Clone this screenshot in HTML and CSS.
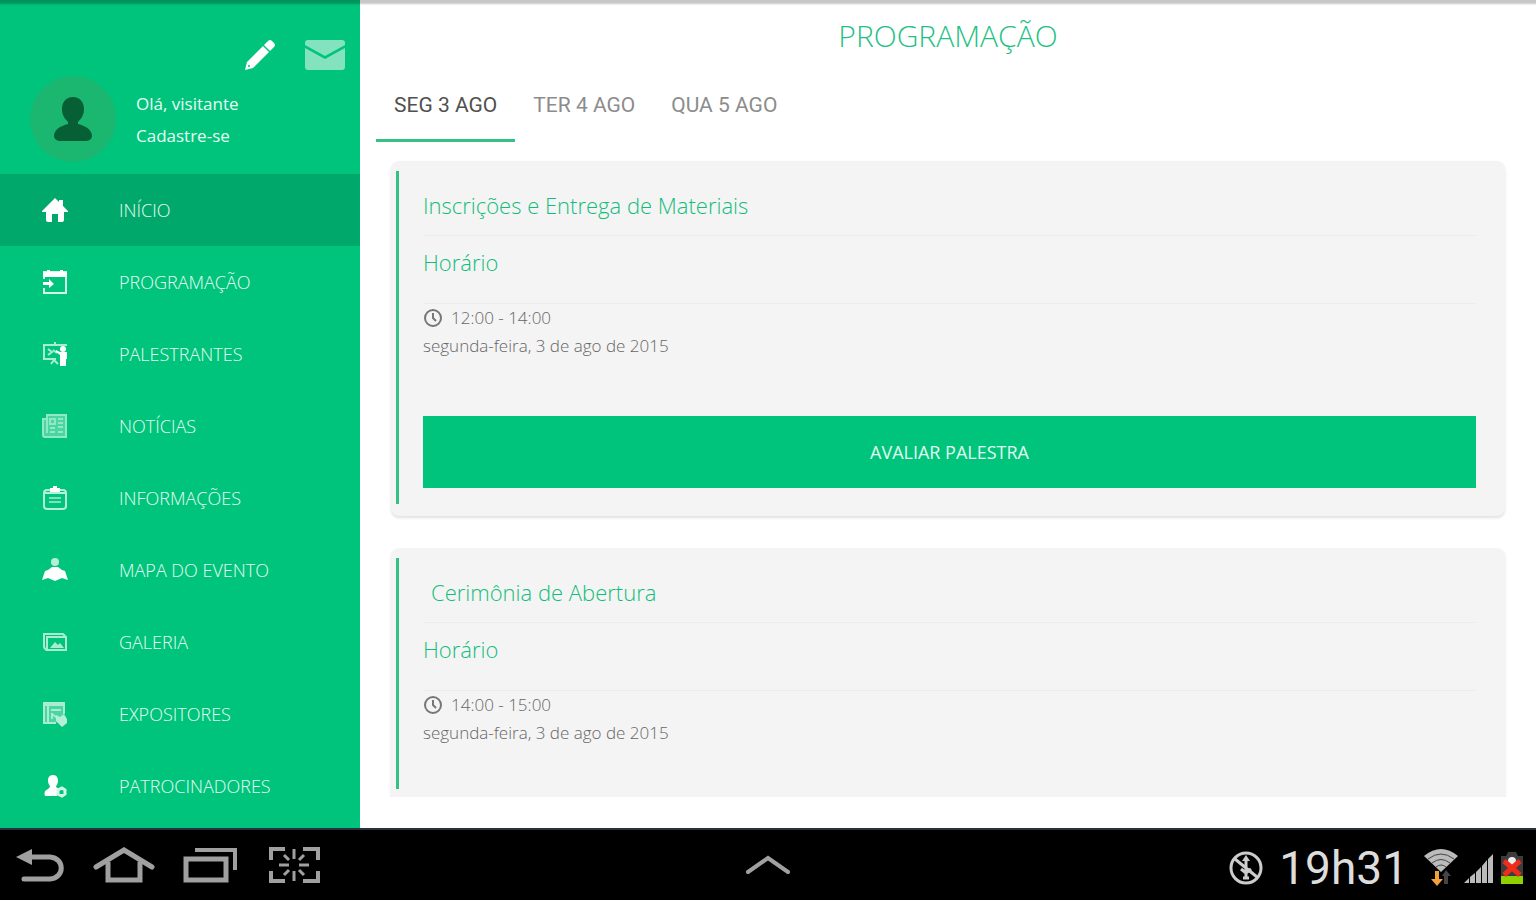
FILE: index.html
```html
<!DOCTYPE html>
<html lang="pt-BR">
<head>
<meta charset="utf-8">
<title>Programação</title>
<link rel="stylesheet" href="styles.css">
</head>
<body>
<div class="app">
  <aside class="sidebar">
    <div class="quick-actions">
      <button class="icon-button" type="button" aria-label="Editar">
        <svg width="32" height="32" viewBox="0 0 32 32" fill="#fff"><path d="M1 31 3 23 19 7 25 13 9 29ZM20 6 24 2Q26 0 28 2L30 4Q32 6 30 8L26 12Z"/><circle cx="5" cy="27" r="1" fill="#00c47c"/></svg>
      </button>
      <button class="icon-button" type="button" aria-label="Mensagens">
        <svg width="42" height="32" viewBox="0 0 42 32" fill="#84e3bf"><path d="M4 1H38Q41 1 41 4V6L21 17 1 6V4Q1 1 4 1ZM1 9 21 20 41 9V28Q41 31 38 31H4Q1 31 1 28Z"/></svg>
      </button>
    </div>
    <div class="profile">
      <span class="avatar">
        <svg width="40" height="46" viewBox="0 0 40 46" fill="#075f35"><path d="M20 1C27 1 31 6 31 13 31 19 28 23 25 26V28C33 30 39 34 39 40 39 43 36 45 32 45H8C4 45 1 43 1 40 1 34 7 30 15 28V26C12 23 9 19 9 13 9 6 13 1 20 1Z"/></svg>
      </span>
      <div class="profile-text">
        <span>Olá, visitante</span>
        <a href="#cadastro">Cadastre-se</a>
      </div>
    </div>
    <nav class="menu">
      <a class="menu-item active" href="#inicio"><svg class="menu-icon" viewBox="0 0 26 26"><path fill="#fff" d="M13 1 17 5V3H21V9L26 14V15H22V23Q22 25 20 25H16V17H10V25H6Q4 25 4 23V15H0V14Z"/></svg>INÍCIO</a>
      <a class="menu-item" href="#programacao"><svg class="menu-icon" viewBox="0 0 26 26" fill="none" stroke="#d4f6e8" stroke-width="2"><path d="M2 10V3H24V24H2V19"/><path fill="#fff" stroke="none" d="M1 3H5V1H8V3H18V1H21V3H25V8H1ZM1 13H7V10L12 15 7 19V16H1Z"/></svg>PROGRAMAÇÃO</a>
      <a class="menu-item" href="#palestrantes"><svg class="menu-icon" viewBox="0 0 26 26" fill="none" stroke="#a9ecd2" stroke-width="2"><path d="M1 4H25M2 4V18H14M13 1V4M6 8 10 11 6 14M11 9 15 12M9 23 12 19 16 23"/><path fill="#fff" stroke="none" d="M14 9 18 11H25V18H24V25H18V14L14 11Z"/><circle cx="21" cy="8" r="3" fill="#fff" stroke="none"/></svg>PALESTRANTES</a>
      <a class="menu-item" href="#noticias"><svg class="menu-icon" viewBox="0 0 26 26" fill="none" stroke="#91e7c6" stroke-width="2"><path fill="#4bd5a1" d="M5 2H24V24H3Q1 24 1 22V6H5Z"/><path d="M5 6V20M8 6H13V11H8ZM16 6H21M16 10H21M8 15H13M16 14H21M8 19H13M16 19H21"/></svg>NOTÍCIAS</a>
      <a class="menu-item" href="#informacoes"><svg class="menu-icon" viewBox="0 0 26 26" fill="none" stroke="#b6efd9" stroke-width="2"><rect x="2" y="5" width="22" height="19" rx="3"/><path d="M2 8H24"/><path stroke="#7fe1bb" d="M7 13H19M7 17H19"/><path d="M8 3H18V7H8ZM11 1H15V4H11Z" fill="#fff" stroke="none"/></svg>INFORMAÇÕES</a>
      <a class="menu-item" href="#mapa"><svg class="menu-icon" viewBox="0 0 26 26"><circle cx="13" cy="5" r="4" fill="#b6efd9"/><path fill="#fff" d="M10 10H16L20 13 23 14 26 23 20 21 13 24 6 21 0 23 3 14 6 13Z"/></svg>MAPA DO EVENTO</a>
      <a class="menu-item" href="#galeria"><svg class="menu-icon" viewBox="0 0 26 26" fill="none" stroke="#a9ecd2" stroke-width="2"><path d="M5 21Q2 20 2 17V5H21L24 8V21H5V8H24"/><path d="M8 19 13 13 16 16 18 14 22 19Z" fill="#a9ecd2" stroke="none"/></svg>GALERIA</a>
      <a class="menu-item" href="#expositores"><svg class="menu-icon" viewBox="0 0 26 26" fill="none" stroke="#a9ecd2" stroke-width="2"><path fill="#4bd5a1" d="M14 22H2V2H22V13"/><path d="M1 4H23M6 5V22M9 9H19M10 12V18M10 13 17 18"/><path d="M14 14 18 16 22 13 25 18V22L20 26 14 20Z" fill="#b6efd9" stroke="none"/></svg>EXPOSITORES</a>
      <a class="menu-item" href="#patrocinadores"><svg class="menu-icon" viewBox="0 0 26 26"><path fill="#fff" d="M11 2C15 2 16 5 16 8 16 11 14 12 14 14L17 16 15 23H3Q1 18 6 16L8 14C8 12 6 11 6 8 6 5 7 2 11 2Z"/><path fill="none" stroke="#d4f6e8" stroke-width="3" d="M20 15 23 17V21L20 23 16 21V17Z"/></svg>PATROCINADORES</a>
    </nav>
  </aside>

  <main class="content">
    <h1 class="page-title">PROGRAMAÇÃO</h1>
    <div class="tabs" role="tablist">
      <button class="tab selected" type="button" role="tab" aria-selected="true">SEG 3 AGO</button>
      <button class="tab" type="button" role="tab" aria-selected="false">TER 4 AGO</button>
      <button class="tab" type="button" role="tab" aria-selected="false">QUA 5 AGO</button>
    </div>
    <div class="sessions">
      <article class="card">
        <div class="card-body">
          <h2 class="card-title">Inscrições e Entrega de Materiais</h2>
          <h3 class="card-subtitle">Horário</h3>
          <p class="time"><svg class="clock" viewBox="0 0 20 20" fill="none" stroke="#777" stroke-width="2"><circle cx="10" cy="10" r="8"/><path d="M10 5V10L13 13"/></svg>12:00 - 14:00</p>
          <p class="date">segunda-feira, 3 de ago de 2015</p>
          <button class="rate" type="button">AVALIAR PALESTRA</button>
        </div>
      </article>
      <article class="card">
        <div class="card-body">
          <h2 class="card-title indented">Cerimônia de Abertura</h2>
          <h3 class="card-subtitle">Horário</h3>
          <p class="time"><svg class="clock" viewBox="0 0 20 20" fill="none" stroke="#777" stroke-width="2"><circle cx="10" cy="10" r="8"/><path d="M10 5V10L13 13"/></svg>14:00 - 15:00</p>
          <p class="date">segunda-feira, 3 de ago de 2015</p>
        </div>
      </article>
    </div>
  </main>
</div>

<footer class="system-bar">
  <div class="system-keys">
    <button class="icon-button" type="button" aria-label="Voltar"><svg width="50" height="40" viewBox="0 0 50 40"><path fill="none" stroke="#a0a0a0" stroke-width="5" stroke-linecap="round" d="M10 12H34C49 13 49 33 34 34H8"/><path fill="#a0a0a0" d="M0 12 16 4V20Z"/></svg></button>
    <button class="icon-button" type="button" aria-label="Início"><svg width="62" height="40" viewBox="0 0 62 40" fill="none" stroke="#a0a0a0" stroke-width="5"><path stroke-linecap="round" d="M3 22 31 5 59 22"/><path d="M15 17V35H47V17"/></svg></button>
    <button class="icon-button" type="button" aria-label="Recentes"><svg width="56" height="40" viewBox="0 0 56 40" fill="none" stroke="#a0a0a0"><path stroke-width="5" d="M4 14H44V35H4Z"/><path stroke-width="4" d="M13 5H53V25"/></svg></button>
    <button class="icon-button capture" type="button" aria-label="Capturar tela"><svg width="52" height="40" viewBox="0 0 52 40" fill="none" stroke="#a0a0a0" stroke-width="4"><path d="M3 15V4H17M35 4H50V15M3 26V36H17M50 26V36H35"/><path stroke-width="3" d="M26 4V14M26 26V36M11 20H21M31 20H41M16 10 21 15M36 10 31 15M16 30 21 25M36 30 31 25"/></svg></button>
  </div>
  <button class="icon-button" type="button" aria-label="Abrir bandeja"><svg width="46" height="20" viewBox="0 0 46 20"><path fill="none" stroke="#a0a0a0" stroke-width="4" stroke-linecap="round" d="M3 17 23 3 43 17"/></svg></button>
  <div class="status">
    <svg class="usb" width="34" height="34" viewBox="0 0 34 34" fill="none" stroke="#ccc" stroke-width="3"><circle cx="17" cy="17" r="15"/><path d="M6 8 28 26M17 7V28M14 27H20M12 18 17 22 22 18"/><path d="M17 4 21 10H13Z" fill="#ccc" stroke="none"/></svg>
    <time class="clock-text">19h31</time>
    <svg class="wifi" width="34" height="40" viewBox="0 0 34 40"><path fill="#bbb" d="M0 8Q17-6 34 8L17 24Z"/><path fill="none" stroke="#444" stroke-width="1" d="M4 11Q17 1 30 11M8 15Q17 8 26 15M12 19Q17 15 22 19"/><path fill="#f2a03a" d="M11 23H15V31H19L13 38 7 31H11Z"/><path fill="#454545" d="M22 22 27 28H24V36H20V28H18Z"/></svg>
    <svg class="signal" width="30" height="32" viewBox="0 0 30 32" fill="#bbb"><path d="M0 31 5 26V31ZM6 31V25L11 21V31ZM12 31V20L17 15V31ZM18 31V14L23 8V31ZM24 31V7L29 2V31Z"/></svg>
    <svg width="24" height="34" viewBox="0 0 24 34"><path fill="#3c3c3c" d="M1 5H6L8 1H16L18 5H23V25H1Z"/><path fill="#8ed000" d="M1 25H23V33H1Z"/><circle cx="12" cy="10" r="4" fill="#eee"/><path stroke="#ee2c1c" stroke-width="5" d="M4 10 20 24M20 10 4 24"/></svg>
  </div>
</footer>
</body>
</html>
```
FILE: styles.css
```css
* { box-sizing: border-box; }

body {
  margin: 0;
  height: 100vh;
  display: flex;
  flex-direction: column;
  background: #fff;
  font-family: "Open Sans", "Noto Sans", sans-serif;
  font-weight: 300;
  overflow: hidden;
}

h1, h2, h3, p { margin: 0; font-weight: 300; }

a { color: inherit; text-decoration: none; }

svg { display: block; flex: none; }

button {
  font: inherit;
  border: 0;
  padding: 0;
  background: none;
  cursor: pointer;
}

.app {
  flex: 1;
  min-height: 0;
  display: flex;
  box-shadow: inset 0 6px 2px -2px rgba(0, 0, 0, 0.22);
}

.sidebar {
  width: 360px;
  flex: none;
  padding-top: 39px;
  background: #00c47c;
  color: #e8fcf4;
  box-shadow: inset 0 6px 2px -2px rgba(0, 0, 0, 0.25);
  overflow: hidden;
}

.quick-actions {
  display: flex;
  justify-content: flex-end;
  gap: 28px;
  padding-right: 14px;
}

.profile {
  display: flex;
  align-items: center;
  gap: 20px;
  margin-top: 5px;
  margin-bottom: 12px;
  padding-left: 30px;
}

.avatar {
  width: 86px;
  height: 86px;
  border-radius: 50%;
  background: #1bb770;
  display: grid;
  place-items: center;
}

.profile-text {
  display: flex;
  flex-direction: column;
  padding-top: 2px;
  font-size: 17px;
  line-height: 32px;
  font-weight: 400;
}

.menu-item {
  height: 72px;
  display: flex;
  align-items: center;
  gap: 51px;
  padding-left: 42px;
  font-size: 18px;
}

.menu-item.active { background: #00a96b; }

.menu-icon { width: 26px; height: 26px; }

.content {
  flex: 1;
  min-width: 0;
  display: flex;
  flex-direction: column;
  padding-top: 16px;
}

.page-title {
  text-align: center;
  font-size: 30px;
  line-height: 40px;
  color: #1fc184;
}

.tabs {
  display: flex;
  margin-top: 14px;
  padding-left: 16px;
}

.tab {
  height: 72px;
  padding: 0 18px;
  font-family: Roboto, sans-serif;
  font-size: 21px;
  font-weight: 400;
  color: #8c8c8c;
  border-bottom: 3px solid transparent;
}

.tab.selected {
  color: #505050;
  border-bottom-color: #35c186;
}

.sessions {
  flex: 1;
  min-height: 0;
  margin: 0 26px 31px;
  padding: 19px 5px 0;
  overflow: hidden;
}

.card {
  padding: 10px 5px 12px;
  border-radius: 8px;
  background: #f4f4f4;
  box-shadow: 0 2px 3px rgba(0, 0, 0, 0.12);
}

.card + .card { margin-top: 32px; }

.card-body {
  min-height: 231px;
  border-left: 3px solid #35c186;
  padding: 0 24px 16px;
}

.card-title,
.card-subtitle {
  font-size: 22px;
  color: #12bd7c;
  border-bottom: 1px solid #ececec;
}

.card-title {
  padding: 12px 0 8px;
  line-height: 44px;
}

.card-title.indented { padding-left: 8px; }

.card-subtitle {
  padding: 6px 0 21px;
  line-height: 40px;
}

.time {
  display: flex;
  align-items: center;
  gap: 8px;
}

.time,
.date {
  font-size: 17px;
  line-height: 28px;
  color: #666;
}

.clock { width: 20px; height: 20px; }

.rate {
  display: block;
  width: 100%;
  height: 72px;
  margin-top: 56px;
  background: #00c47c;
  color: #e0faf0;
  font-size: 18px;
  font-weight: 400;
}

.system-bar {
  flex: none;
  height: 72px;
  display: grid;
  grid-template-columns: 1fr auto 1fr;
  align-items: center;
  background: #000;
  border-top: 2px solid #26323c;
}

.system-keys {
  display: flex;
  align-items: center;
  gap: 27px;
  padding-left: 16px;
}

.capture { margin-left: 3px; }

.status {
  display: flex;
  align-items: center;
  justify-content: flex-end;
  gap: 6px;
  padding-top: 5px;
  padding-right: 12px;
}

.clock-text {
  font-family: Roboto, sans-serif;
  font-size: 46px;
  line-height: 60px;
  font-weight: 400;
  color: #ddd;
  margin: 0 10px;
}
```
